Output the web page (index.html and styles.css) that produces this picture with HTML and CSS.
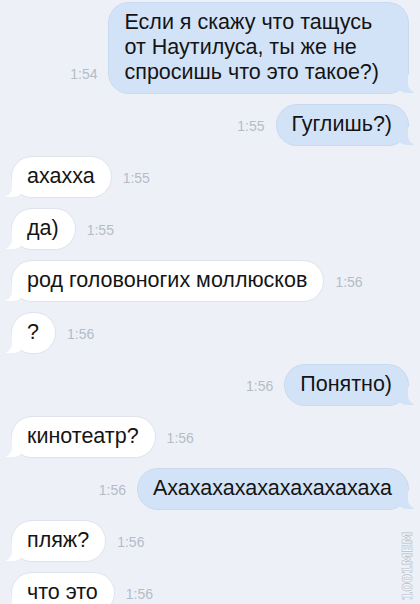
FILE: index.html
```html
<!DOCTYPE html>
<html lang="ru">
<head>
  <meta charset="UTF-8">
  <title>Сообщения</title>
  <link rel="stylesheet" href="styles.css">
</head>
<body>
  <div class="chat">
    <div class="row out">
      <span class="time">1:54</span>
      <div class="bubble long">Если я скажу что тащусь<br>от Наутилуса, ты же не<br>спросишь что это такое?)</div>
    </div>
    <div class="row out">
      <span class="time">1:55</span>
      <div class="bubble">Гуглишь?)</div>
    </div>
    <div class="row in">
      <div class="bubble">ахахха</div>
      <span class="time">1:55</span>
    </div>
    <div class="row in">
      <div class="bubble">да)</div>
      <span class="time">1:55</span>
    </div>
    <div class="row in">
      <div class="bubble">род головоногих моллюсков</div>
      <span class="time">1:56</span>
    </div>
    <div class="row in">
      <div class="bubble">?</div>
      <span class="time">1:56</span>
    </div>
    <div class="row out">
      <span class="time">1:56</span>
      <div class="bubble">Понятно)</div>
    </div>
    <div class="row in">
      <div class="bubble">кинотеатр?</div>
      <span class="time">1:56</span>
    </div>
    <div class="row out">
      <span class="time">1:56</span>
      <div class="bubble">Ахахахахахахахахахаха</div>
    </div>
    <div class="row in">
      <div class="bubble">пляж?</div>
      <span class="time">1:56</span>
    </div>
    <div class="row in">
      <div class="bubble">что это</div>
      <span class="time">1:56</span>
    </div>
  </div>

  <div class="watermark">1001MEM</div>
</body>
</html>
```

FILE: styles.css
```css
body {
  margin: 0;
  height: 604px;
  overflow: hidden;
  background-color: #edf1f7;
  font-family: "Liberation Sans", Arial, sans-serif;
  position: relative;
}

.chat {
  display: flex;
  flex-direction: column;
  gap: 12px;
  padding: 3px 12px 0 12px;
}

.row {
  display: flex;
  align-items: flex-end;
  gap: 12px;
}

.row.out {
  justify-content: flex-end;
}

.bubble {
  position: relative;
  padding: 7px 16px 8px 15px;
  font-size: 21.5px;
  line-height: 25px;
  color: #141414;
  border-radius: 20px;
}

.bubble.long {
  padding-right: 29px;
}

.in .bubble {
  background-color: #fff;
  box-shadow: 0 0 0 1px #dfe4ec;
}

.out .bubble {
  background-color: #d3e3f7;
  box-shadow: 0 0 0 1px #c9d9ef;
}

/* хвостик пузыря */
.bubble::before,
.bubble::after {
  content: "";
  position: absolute;
  bottom: 0;
  height: 18px;
}

.in .bubble::before {
  left: -6px;
  width: 20px;
  background-color: #fff;
  border-bottom-right-radius: 14px;
}

.in .bubble::after {
  left: -12px;
  width: 12px;
  background-color: #edf1f7;
  border-bottom-right-radius: 9px;
}

.out .bubble::before {
  right: -6px;
  width: 20px;
  background-color: #d3e3f7;
  border-bottom-left-radius: 14px;
}

.out .bubble::after {
  right: -12px;
  width: 12px;
  background-color: #edf1f7;
  border-bottom-left-radius: 9px;
}

.time {
  font-size: 14px;
  line-height: 16px;
  color: #b4bcc8;
  padding-bottom: 11px;
}

.watermark {
  position: absolute;
  right: -22px;
  bottom: 30px;
  transform: rotate(-90deg);
  font-size: 14px;
  font-weight: bold;
  font-family: "DejaVu Sans Condensed", "Liberation Sans Narrow", sans-serif;
  font-stretch: condensed;
  color: #f4f6f9;
  -webkit-text-stroke: 0.6px #b8bec8;
}
```
